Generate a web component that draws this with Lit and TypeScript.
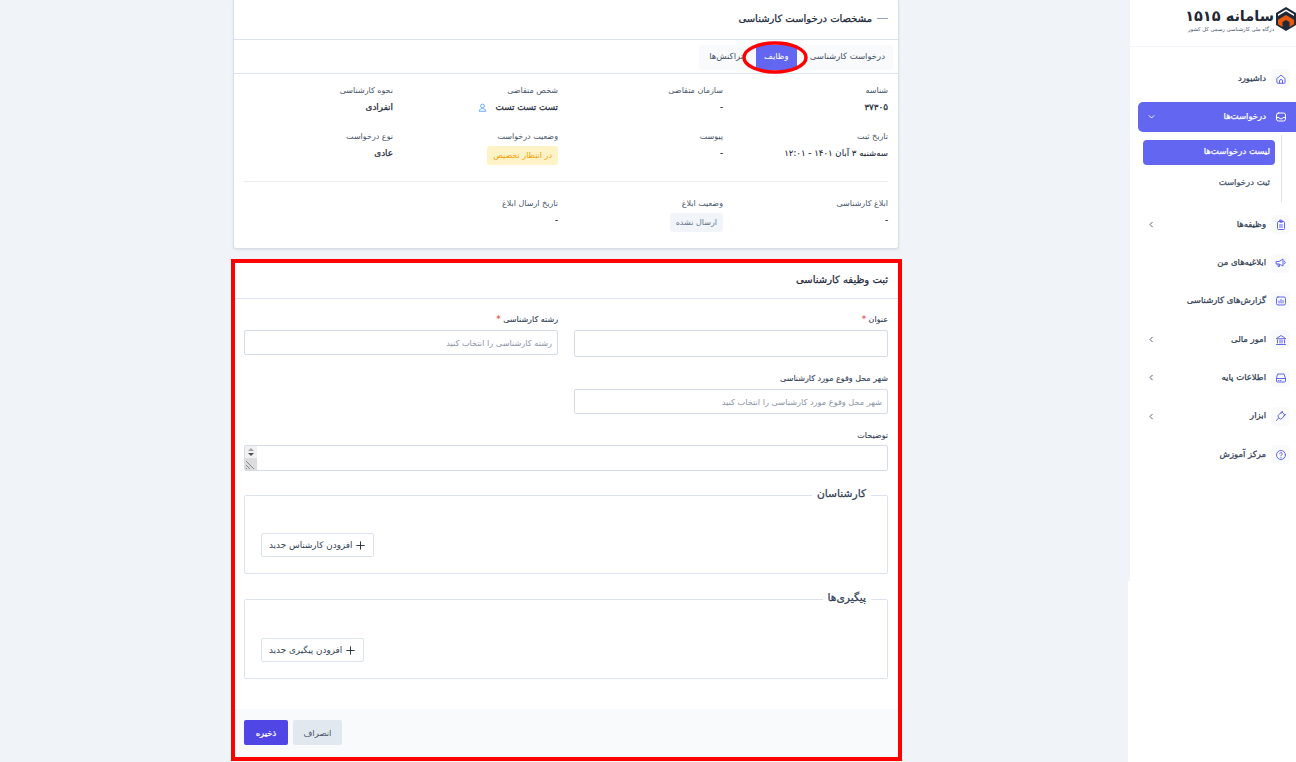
import { LitElement, html, css, svg } from 'lit';
import { customElement } from 'lit/decorators.js';

const icons: Record<string, unknown> = {
  home: svg`<path d="M4 11l8-7 8 7v8a1.5 1.5 0 0 1-1.500 1.500H5.500A1.500 1.500 0 0 1 4 19z"/><path d="M9 20v-4a3 3 0 0 1 6 0v4"/>`,
  inbox: svg`<rect x="3" y="4" width="18" height="16" rx="4"/><path d="M3 13h5l1.500 2.500h5L16 13h5"/>`,
  task: svg`<rect x="5" y="5" width="14" height="16" rx="2"/><rect x="9" y="2.500" width="6" height="4" rx="1"/><path d="M9 12h6M9 16h6"/>`,
  notice: svg`<path d="M3 9h5l8-5v14l-8-4H3z"/><path d="M19 8a4 4 0 0 1 0 6"/><path d="M6 14v5h3v-4"/>`,
  report: svg`<rect x="3" y="4" width="18" height="16" rx="3"/><path d="M8 16v-4M12 16V9M16 16v-5"/>`,
  bank: svg`<path d="M3 9l9-6 9 6z"/><path d="M5 12v6M10 12v6M14 12v6M19 12v6M3 21h18"/>`,
  base: svg`<path d="M6 4h12l3 9v5a2 2 0 0 1-2 2H5a2 2 0 0 1-2-2v-5z"/><path d="M3 13h18M7 17h1M11 17h1"/>`,
  tools: svg`<path d="M14 4l6 6-6 7a4 4 0 0 1-6-1l-1-1a4 4 0 0 1 1-6z"/><path d="M7 16l-4 5M12 7l3-4M17 12l4-3"/>`,
  help: svg`<circle cx="12" cy="12" r="9"/><path d="M9.500 9.500a2.500 2.500 0 1 1 3.800 2.100c-.9.6-1.300 1.100-1.300 2.200"/><path d="M12 17v.5"/>`,
};

const chevronLeft = html`<svg class="chev" viewBox="0 0 24 24"><path d="M15 5l-7 7 7 7"/></svg>`;
const chevronDown = html`<svg class="chev" viewBox="0 0 24 24"><path d="M5 9l7 7 7-7"/></svg>`;

const navItems = [
  { icon: 'home', label: 'داشبورد' },
  { icon: 'inbox', label: 'درخواست‌ها', active: true },
  { icon: 'task', label: 'وظیفه‌ها', more: true },
  { icon: 'notice', label: 'ابلاغیه‌های من' },
  { icon: 'report', label: 'گزارش‌های کارشناسی' },
  { icon: 'bank', label: 'امور مالی', more: true },
  { icon: 'base', label: 'اطلاعات پایه', more: true },
  { icon: 'tools', label: 'ابزار', more: true },
  { icon: 'help', label: 'مرکز آموزش' },
];

@customElement('app-root')
export class AppRoot extends LitElement {
  static styles = css`
    :host {
      display: block;
      height: 762px;
      overflow: hidden;
      background: #f0f4f9;
      font-family: "DejaVu Sans", sans-serif;
      color: #1e293b;
    }
    * {
      box-sizing: border-box;
    }
    .page {
      direction: rtl;
      display: flex;
      height: 762px;
    }

    /* sidebar */
    .sidebar {
      width: 166px;
      flex: none;
      display: flex;
      flex-direction: column;
    }
    .side-top {
      height: 581px;
      background: #fff;
    }
    .side-foot {
      flex: 1;
      background: #fff;
      margin-left: -2px;
    }
    .logo {
      height: 47px;
      border-bottom: 1px solid #f1f5f9;
      display: flex;
      gap: 2px;
      padding-top: 7px;
    }
    .logo svg {
      width: 20px;
      height: 24px;
      flex: none;
    }
    .logo-name {
      font-size: 14.500px;
      font-weight: 700;
      line-height: 18px;
      color: #1f2937;
      white-space: nowrap;
    }
    .logo-sub {
      font-size: 5.300px;
      line-height: 8px;
      color: #475569;
      white-space: nowrap;
    }
    .nav {
      padding: 16.500px 0 0 0;
      display: flex;
      flex-direction: column;
    }
    .item {
      height: 30px;
      margin-bottom: 8.300px;
      margin-left: 8px;
      display: flex;
      align-items: center;
      font-size: 8.500px;
      -webkit-text-stroke: 0.25px currentColor;
      color: #334155;
      padding-right: 6px;
      border-radius: 5px 0 0 5px;
    }
    .item-label {
      padding-bottom: 2px;
    }
    .ico {
      width: 19px;
      height: 19px;
      flex: none;
      border-radius: 5px;
      background: #f8fafc;
      display: flex;
      align-items: center;
      justify-content: center;
      margin-left: 5px;
    }
    .ico svg {
      width: 12px;
      height: 12px;
      fill: none;
      stroke: #6366f1;
      stroke-width: 2;
      stroke-linecap: round;
      stroke-linejoin: round;
    }
    .item .chev {
      margin-right: auto;
      margin-left: 9px;
    }
    .chev {
      width: 9px;
      height: 9px;
      fill: none;
      stroke: #475569;
      stroke-width: 2.500;
    }
    .item.active {
      background: #6366f1;
      color: #fff;
      margin-bottom: 2px;
    }
    .item.active .ico {
      background: transparent;
    }
    .item.active .ico svg,
    .item.active .chev {
      stroke: #fff;
    }
    .sub {
      height: 68px;
      margin: 0 15px 8px 13px;
      position: relative;
      padding: 6px 6px 0 0;
    }
    .sub::before {
      content: '';
      position: absolute;
      right: -1px;
      top: 1px;
      bottom: 0;
      width: 1px;
      background: #dde3ee;
    }
    .sub div {
      height: 25px;
      display: flex;
      align-items: center;
      padding: 0 5px 2px 0;
      font-size: 8.500px;
      -webkit-text-stroke: 0.25px currentColor;
      color: #475569;
      border-radius: 4px;
      margin-bottom: 6px;
    }
    .sub .current {
      background: #6366f1;
      color: #fff;
    }

    /* main column */
    .main {
      width: 666px;
      margin-right: 231px;
      flex: none;
    }
    .card {
      background: #fff;
      border: 1px solid #d8dfea;
      border-top: 0;
      border-radius: 0 0 3px 3px;
      height: 249px;
      box-shadow: 0 1px 2px rgba(100, 116, 139, 0.15);
    }
    .card-head {
      height: 40px;
      border-bottom: 1px solid #dde3ee;
      display: flex;
      align-items: center;
      padding: 0 10px 2px 0;
      font-size: 10px;
      -webkit-text-stroke: 0.25px currentColor;
      gap: 5px;
    }
    .dash {
      width: 11px;
      height: 1px;
      background: #94a3b8;
    }
    .tabs-row {
      height: 34px;
      border-bottom: 1px solid #dde3ee;
      padding: 4px 5px 0 0;
    }
    .tabs {
      display: inline-flex;
      gap: 5px;
      height: 25px;
      background: #f8fafc;
      border-radius: 2px;
      font-size: 8.500px;
      color: #475569;
    }
    .tab {
      padding: 0 8px 2px;
      display: flex;
      align-items: center;
      position: relative;
    }
    .tab:last-child {
      padding-left: 10px;
    }
    .tab.active {
      background: #6366f1;
      color: #fff;
    }
    .ring {
      position: absolute;
      left: -14px;
      top: -4px;
      width: 66px;
      height: 33px;
      fill: none;
      stroke: #f00;
      stroke-width: 3.500;
    }
    .details {
      padding: 10px 10px 0;
    }
    .grid4 {
      display: grid;
      grid-template-columns: repeat(4, 149px);
      column-gap: 16px;
      row-gap: 16px;
    }
    .field {
      min-width: 0;
    }
    .lbl {
      font-size: 8px;
      line-height: 14px;
      color: #475569;
      white-space: nowrap;
    }
    .val {
      margin-top: 2px;
      font-size: 8.800px;
      line-height: 14px;
      -webkit-text-stroke: 0.25px currentColor;
      color: #1e293b;
      white-space: nowrap;
      display: flex;
      align-items: center;
      gap: 9px;
    }
    .val.plain {
      font-size: 8.600px;
      -webkit-text-stroke: 0.1px currentColor;
    }
    .val svg {
      width: 9px;
      height: 9px;
      fill: none;
      stroke: #60a5fa;
      stroke-width: 2.500;
    }
    .badge {
      display: block;
      width: fit-content;
      margin-top: 2px;
      height: 19px;
      line-height: 19px;
      padding: 0 6px;
      border-radius: 3px;
      font-size: 8px;
      white-space: nowrap;
    }
    .badge.wait {
      background: #fef3c7;
      color: #f59e0b;
    }
    .badge.idle {
      background: #f1f5f9;
      color: #64748b;
    }
    .split {
      height: 1px;
      background: #e9edf3;
      margin: 16px 0 15px;
    }

    /* form card with the red annotation frame */
    .form-card {
      margin: 10px -3px 0 -2px;
      height: 502px;
      border: 4px solid #f00;
      background: #fff;
      display: flex;
      flex-direction: column;
    }
    .form-head {
      height: 36px;
      flex: none;
      border-bottom: 1px solid #dde3ee;
      display: flex;
      align-items: center;
      padding: 0 10px 3px 0;
      font-size: 10px;
      -webkit-text-stroke: 0.25px currentColor;
    }
    .form-body {
      flex: 1;
      padding: 14px 10px 0 9px;
    }
    .grid2 {
      display: grid;
      grid-template-columns: 314px 314px;
      column-gap: 16px;
      margin-bottom: 15px;
    }
    .form-lbl {
      display: block;
      font-size: 8px;
      line-height: 14px;
      color: #334155;
      -webkit-text-stroke: 0.12px currentColor;
      margin-bottom: 3px;
      white-space: nowrap;
    }
    .req {
      color: #ef4444;
    }
    .input {
      display: block;
      width: 100%;
      height: 25px;
      border: 1px solid #d5dce7;
      border-radius: 2px;
      padding: 0 5px;
      font-family: inherit;
      font-size: 8.200px;
      color: #1e293b;
      background: #fff;
      outline: none;
    }
    .input.tall {
      height: 27px;
    }
    .input::placeholder {
      color: #8b95a5;
    }
    .tight {
      margin-bottom: 2px;
    }
    .area {
      position: relative;
      height: 26px;
    }
    textarea.input {
      height: 26px;
      padding: 2px 5px;
      resize: none;
    }
    .scroll {
      position: absolute;
      left: 1px;
      top: 1px;
      bottom: 1px;
      width: 12px;
      background: #f1f1f1;
      display: flex;
      flex-direction: column;
      align-items: center;
      padding-top: 2px;
      gap: 2px;
    }
    .scroll i {
      display: block;
      width: 0;
      height: 0;
      border-left: 3px solid transparent;
      border-right: 3px solid transparent;
    }
    .scroll .up {
      border-bottom: 3px solid #a3a3a3;
    }
    .scroll .down {
      border-top: 3px solid #505050;
    }
    .grip {
      margin-top: auto;
      width: 12px;
      height: 12px;
      background: #dcdcdc;
    }
    .grip svg {
      display: block;
      stroke: #8a8a8a;
      stroke-width: 1;
    }
    fieldset {
      margin: 17px 0 0;
      border: 1px solid #dde3ee;
      border-radius: 2px;
      padding: 31px 16px 16px;
      display: flex;
      justify-content: flex-end;
    }
    fieldset + fieldset {
      margin-top: 18px;
      padding-top: 32px;
    }
    legend {
      padding: 0 5px 2px;
      font-size: 10.700px;
      line-height: 12px;
      -webkit-text-stroke: 0.25px currentColor;
      color: #334155;
    }
    .add {
      height: 24px;
      display: flex;
      align-items: center;
      gap: 3px;
      border: 1px solid #dde3ee;
      border-radius: 2px;
      background: #fff;
      padding: 0 7px;
      font-family: inherit;
      font-size: 8.800px;
      color: #334155;
    }
    .add svg {
      width: 11px;
      height: 11px;
      stroke: #1e293b;
      stroke-width: 2;
      fill: none;
    }
    .form-foot {
      height: 48px;
      flex: none;
      background: #f8fafc;
      display: flex;
      justify-content: flex-end;
      align-items: flex-start;
      gap: 5px;
      padding: 11px 9px 0;
    }
    .btn {
      height: 25px;
      border: 0;
      border-radius: 2px;
      font-family: inherit;
      font-size: 8.500px;
    }
    .btn.cancel {
      width: 49px;
      background: #e2e8f0;
      color: #475569;
    }
    .btn.save {
      width: 44px;
      background: #4f46e5;
      color: #fff;
      -webkit-text-stroke: 0.25px currentColor;
    }
  `;

  private renderNav() {
    return navItems.map(
      (it) => html`
        <div class="item ${it.active ? 'active' : ''}">
          <span class="ico"><svg viewBox="0 0 24 24">${icons[it.icon]}</svg></span>
          <span class="item-label">${it.label}</span>
          ${it.active ? chevronDown : it.more ? chevronLeft : ''}
        </div>
        ${it.active
          ? html`<div class="sub">
              <div class="current">لیست درخواست‌ها</div>
              <div>ثبت درخواست</div>
            </div>`
          : ''}
      `
    );
  }

  private field(label: string, value: unknown, plain = false) {
    return html`<div class="field">
      <div class="lbl">${label}</div>
      <div class="val ${plain ? 'plain' : ''}">${value}</div>
    </div>`;
  }

  private badge(label: string, text: string, kind: string) {
    return html`<div class="field">
      <div class="lbl">${label}</div>
      <span class="badge ${kind}">${text}</span>
    </div>`;
  }

  render() {
    const person = html`<span>تست تست تست</span>
      <svg viewBox="0 0 24 24"><circle cx="12" cy="8" r="5" /><path d="M3 22c1-6 5-7 9-7s8 1 9 7z" /></svg>`;
    const plus = html`<svg viewBox="0 0 24 24"><path d="M12 3v18M3 12h18" /></svg>`;

    return html`
      <div class="page">
        <aside class="sidebar">
          <div class="side-top">
            <div class="logo">
              <svg viewBox="0 0 20 24">
                <path d="M10 0l10 6v12l-10 6-10-6V6z" fill="#1f2937" />
                <path d="M10 2.500l8 4.800v1.700L10 4.200 2 9V7.300z" fill="#fff" />
                <path d="M10 8l8 4.800v4.500L13.500 20v-5L10 13l-3.500 2v5L2 17.300v-4.500z" fill="#ea580c" />
              </svg>
              <div>
                <div class="logo-name">سامانه ۱۵۱۵</div>
                <div class="logo-sub">درگاه ملی کارشناسی رسمی کل کشور</div>
              </div>
            </div>
            <nav class="nav">${this.renderNav()}</nav>
          </div>
          <div class="side-foot"></div>
        </aside>

        <main class="main">
          <section class="card">
            <div class="card-head"><span class="dash"></span><span>مشخصات درخواست کارشناسی</span></div>
            <div class="tabs-row">
              <div class="tabs">
                <div class="tab">درخواست کارشناسی</div>
                <div class="tab active">
                  وظایف
                  <svg class="ring" viewBox="0 0 66 33"><ellipse cx="33" cy="16.500" rx="31" ry="14.500" /></svg>
                </div>
                <div class="tab">تراکنش‌ها</div>
              </div>
            </div>
            <div class="details">
              <div class="grid4">
                ${this.field('شناسه', '۳۷۳۰۵')}
                ${this.field('سازمان متقاضی', '-', true)}
                ${this.field('شخص متقاضی', person)}
                ${this.field('نحوه کارشناسی', 'انفرادی')}
                ${this.field('تاریخ ثبت', 'سه‌شنبه ۳ آبان ۱۴۰۱ - ۱۲:۰۱', true)}
                ${this.field('پیوست', '-', true)}
                ${this.badge('وضعیت درخواست', 'در انتظار تخصیص', 'wait')}
                ${this.field('نوع درخواست', 'عادی')}
              </div>
              <div class="split"></div>
              <div class="grid4">
                ${this.field('ابلاغ کارشناسی', '-', true)}
                ${this.badge('وضعیت ابلاغ', 'ارسال نشده', 'idle')}
                ${this.field('تاریخ ارسال ابلاغ', '-', true)}
              </div>
            </div>
          </section>

          <section class="form-card">
            <div class="form-head">ثبت وظیفه کارشناسی</div>
            <div class="form-body">
              <div class="grid2">
                <div>
                  <label class="form-lbl">عنوان <span class="req">*</span></label>
                  <input class="input tall" />
                </div>
                <div>
                  <label class="form-lbl">رشته کارشناسی <span class="req">*</span></label>
                  <input class="input" placeholder="رشته کارشناسی را انتخاب کنید" />
                </div>
              </div>
              <div class="grid2">
                <div>
                  <label class="form-lbl">شهر محل وقوع مورد کارشناسی</label>
                  <input class="input" placeholder="شهر محل وقوع مورد کارشناسی را انتخاب کنید" />
                </div>
              </div>
              <label class="form-lbl tight">توضیحات</label>
              <div class="area">
                <textarea class="input"></textarea>
                <div class="scroll">
                  <i class="up"></i>
                  <i class="down"></i>
                  <div class="grip">
                    <svg width="12" height="12" viewBox="0 0 12 12"><path d="M1 3l8 8M1 7l4 4M1 10l1 1" /></svg>
                  </div>
                </div>
              </div>
              <fieldset>
                <legend>کارشناسان</legend>
                <button class="add">${plus}افزودن کارشناس جدید</button>
              </fieldset>
              <fieldset>
                <legend>پیگیری‌ها</legend>
                <button class="add">${plus}افزودن پیگیری جدید</button>
              </fieldset>
            </div>
            <div class="form-foot">
              <button class="btn cancel">انصراف</button>
              <button class="btn save">ذخیره</button>
            </div>
          </section>
        </main>
      </div>
    `;
  }
}
